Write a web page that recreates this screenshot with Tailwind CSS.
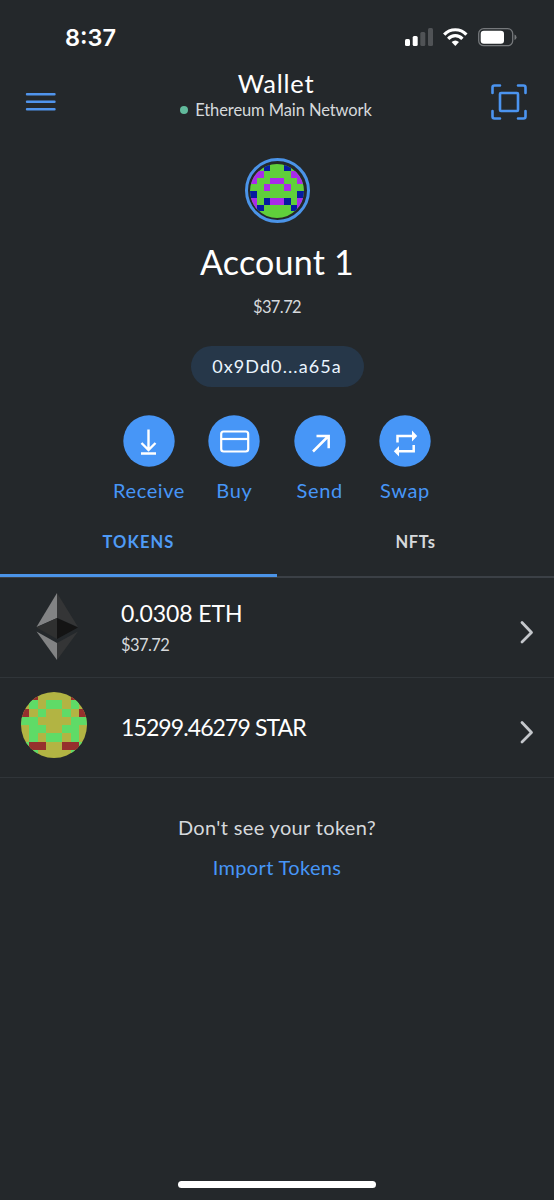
<!DOCTYPE html>
<html lang="en">
<head>
<meta charset="utf-8">
<title>Wallet</title>
<script src="https://cdn.jsdelivr.net/npm/@tailwindcss/browser@4"></script>
</head>
<body class="bg-[#24282b]">
<div class="flex h-[1200px] w-[554px] flex-col overflow-hidden bg-[#24282b] font-['Lato',sans-serif] text-white">
  <div class="flex h-[70px] shrink-0 items-center justify-between pt-1 pr-[37px] pl-[65px]">
    <span class="pt-px font-['Inter',sans-serif] text-[23.5px] leading-none font-semibold">8:37</span>
    <svg class="mt-[2px]" width="112" height="20" viewBox="0 0 112 20">
      <rect x="0" y="11" width="5" height="7" rx="1.5" fill="#fff"/>
      <rect x="7.7" y="8" width="5" height="10" rx="1.5" fill="#fff"/>
      <rect x="15.3" y="4" width="5" height="14" rx="1.5" fill="#505356"/>
      <rect x="23" y="0" width="5" height="18" rx="1.5" fill="#505356"/>
      <g fill="none" stroke="#fff" stroke-width="3.2">
        <path d="M39.2 6.6C45.300 .1 55.300 .1 61.400 6.600"/>
        <path d="M43.200 10.800c3.900-4.200 10.300-4.200 14.200 0"/>
      </g>
      <path d="M46.600 14q3.700-3 7.400 0L50.300 18z" fill="#fff"/>
      <rect x="73.700" y=".7" width="34" height="17" rx="5" fill="none" stroke="#75787b" stroke-width="1.300"/>
      <rect x="75.700" y="2.700" width="23.300" height="13" rx="3.200" fill="#fff"/>
      <path d="M109.500 6.500q2 .7 2 2.700t-2 2.700z" fill="#75787b"/>
    </svg>
  </div>

  <div class="flex h-[63px] shrink-0 items-center justify-between pr-[27px] pl-[25px]">
    <svg class="w-[36px]" width="36" height="22" viewBox="0 0 36 22" stroke="#5094ec" stroke-width="2.400" stroke-linecap="round"><path d="M2 3.200h27.500M2 10.700h27.500M2 18.200h27.500"/></svg>
    <div class="flex flex-col items-center pb-[15px]">
      <div class="text-[25.500px] leading-[30px] tracking-[0.75px]">Wallet</div>
      <div class="mt-[1px] flex items-center gap-[7px] text-[#d6d9dc]">
        <span class="size-[8px] rounded-full bg-[#61ba9c]"></span>
        <span class="text-[16.500px] leading-[22px] tracking-[-0.090px]">Ethereum Main Network</span>
      </div>
    </div>
    <svg width="36" height="36" viewBox="0 0 36 36" fill="none" stroke="#4b94f0" stroke-width="2.600" stroke-linecap="round" stroke-linejoin="round"><path d="M1.500 9V3.500q0-2 2-2H9M27 1.500h5.500q2 0 2 2V9M34.500 27v5.500q0 2-2 2H27M9 34.500H3.500q-2 0-2-2V27"/><rect x="9" y="9" width="18" height="18" rx="1"/></svg>
  </div>

  <div class="flex h-[253px] shrink-0 flex-col items-center pt-[25px]">
    <div class="flex size-[65px] shrink-0 items-center justify-center rounded-full border-3 border-[#4b94e8]">
      <svg class="size-[54px] rounded-full" viewBox="0 0 8 8" shape-rendering="crispEdges">
        <path fill="#60cf3b" d="M0 0h8v8H0z"/>
        <path fill="#a92bea" d="M0 1h2v1H0zM6 1h2v1H6zM0 2h1v1H0zM7 2h1v1H7zM3 2h2v1H3zM2 3h1v1H2zM5 3h1v1H5zM3 5h2v1H3zM0 5h1v2H0zM7 5h1v2H7z"/>
        <path fill="#061ba0" d="M2 0h1v1H2zM5 0h1v1H5zM0 4h1v1H0zM7 4h1v1H7zM2 5h1v1H2zM5 5h1v1H5zM1 6h1v1H1zM6 6h1v1H6z"/>
      </svg>
    </div>
    <div class="mt-[17px] shrink-0 text-[34px] leading-[44px] tracking-[0.200px]">Account 1</div>
    <div class="mt-[12px] shrink-0 text-[16.500px] leading-[22px] tracking-[-0.600px] text-[#d6d9dc]">$37.72</div>
    <div class="mt-[28px] flex h-[41px] w-[173px] shrink-0 items-center justify-center rounded-full bg-[#263749] text-[18px] tracking-[1.1px] text-[#eaf5ff]">0x9Dd0...a65a</div>
  </div>

  <div class="flex h-[134px] shrink-0 justify-center pt-[29px] text-[20px] leading-[24px] tracking-[0.600px] text-[#4796f7]">
    <div class="flex w-[85.300px] flex-col items-center gap-[11px]">
      <svg width="52" height="52" viewBox="0 0 52 52"><circle cx="26" cy="26" r="25.700" fill="#4796f7"/><path d="M25.500 14.500v20M18.500 28l7 7 7-7M18 38.500h15" fill="none" stroke="#fff" stroke-width="2.400"/></svg>
      <span>Receive</span>
    </div>
    <div class="flex w-[85.300px] flex-col items-center gap-[11px]">
      <svg width="52" height="52" viewBox="0 0 52 52"><circle cx="26" cy="26" r="25.700" fill="#4796f7"/><g fill="none" stroke="#fff" stroke-width="2.200"><rect x="13.200" y="16.500" width="27" height="20" rx="2.500"/><path d="M13.200 24h27"/></g></svg>
      <span>Buy</span>
    </div>
    <div class="flex w-[85.300px] flex-col items-center gap-[11px]">
      <svg width="52" height="52" viewBox="0 0 52 52"><circle cx="26" cy="26" r="25.700" fill="#4796f7"/><path d="M19 36.500 34.500 21M22.500 21h12.200v12.200" fill="none" stroke="#fff" stroke-width="2.500"/></svg>
      <span>Send</span>
    </div>
    <div class="flex w-[85.300px] flex-col items-center gap-[11px]">
      <svg width="52" height="52" viewBox="0 0 52 52"><circle cx="26" cy="26" r="25.700" fill="#4796f7"/><path d="M18.500 27.500v-6.500h15M34.700 30v6.200h-15" fill="none" stroke="#fff" stroke-width="2.500"/><path d="M33 15.500l5.200 5.500-5.200 5.500zM20 31l-5.200 5.300L20 41.500z" fill="#fff"/></svg>
      <span>Swap</span>
    </div>
  </div>

  <div class="flex h-[58px] shrink-0 border-b-2 border-[#3b4046] text-[16.500px] leading-[22px] font-bold">
    <div class="-mb-px flex flex-1 justify-center border-b-3 border-[#4b94e8] pt-[11px] text-[#4f9bf6]"><span class="tracking-[1.100px]">TOKENS</span></div>
    <div class="flex flex-1 justify-center pt-[11px] tracking-[0.700px] text-[#d6d9dc]">NFTs</div>
  </div>

  <div class="flex h-[100px] shrink-0 items-center border-b border-[#303539] pr-[20px] pb-[2px] pl-[21px]">
    <svg class="shrink-0" width="72" height="68" viewBox="0 0 72 68">
      <path fill="#828384" d="M36 0 15.500 34 36 25z"/><path fill="#343536" d="M36 0v25l21 9z"/>
      <path fill="#2f3030" d="M36 25 15.500 34.500 36 46z"/><path fill="#141414" d="M36 25v21l21-11.500z"/>
      <path fill="#828384" d="M15.500 38.500 36 50v17z"/><path fill="#343536" d="M36 50v17l21-28.500z"/>
    </svg>
    <div class="ml-[28px] flex-1">
      <div class="text-[23px] leading-[30px] tracking-[-0.100px]">0.0308 ETH</div>
      <div class="mt-[6px] text-[16.500px] leading-[22px] tracking-[-0.600px] text-[#d6d9dc]">$37.72</div>
    </div>
    <svg class="mt-[10px]" width="14" height="24" viewBox="0 0 14 24" fill="none" stroke="#c4c7cb" stroke-width="2.800" stroke-linecap="round" stroke-linejoin="round"><path d="M2 2.500 11.500 12.500 2 22"/></svg>
  </div>

  <div class="flex h-[100px] shrink-0 items-center border-b border-[#303539] pr-[20px] pb-[2px] pl-[21px]">
    <svg class="-mt-[4px] size-[66px] shrink-0 rounded-full" viewBox="0 0 8 8" shape-rendering="crispEdges">
      <path fill="#b2b443" d="M0 0h8v8H0z"/>
      <path fill="#5fdb67" d="M1 1h1v1H1zM6 1h1v1H6zM3 1h2v1H3zM2 2h1v1H2zM5 2h1v1H5zM0 3h2v1H0zM6 3h2v1H6zM1 4h2v1H1zM5 4h2v1H5zM1 5h1v1H1zM6 5h1v1H6zM3 5h2v1H3zM0 6h1v2H0zM7 6h1v2H7zM1 7h1v1H1zM6 7h1v1H6z"/>
      <path fill="#96302d" d="M1 0h1v1H1zM6 0h1v1H6zM0 2h1v1H0zM7 2h1v1H7zM1 6h2v1H1zM5 6h2v1H5z"/>
    </svg>
    <div class="ml-[34px] flex-1 text-[23px] leading-[30px] tracking-[-0.900px]">15299.46279 STAR</div>
    <svg class="mt-[10px]" width="14" height="24" viewBox="0 0 14 24" fill="none" stroke="#c4c7cb" stroke-width="2.800" stroke-linecap="round" stroke-linejoin="round"><path d="M2 2.500 11.500 12.500 2 22"/></svg>
  </div>

  <div class="flex flex-1 flex-col items-center gap-[14px] pt-[36px] text-[20px] leading-[26px] tracking-[0.350px]">
    <div class="text-[#d6d9dc]">Don't see your token?</div>
    <div class="text-[#4796f7]">Import Tokens</div>
  </div>
  <div class="mx-auto mb-[12px] h-[7px] w-[198px] shrink-0 rounded-full bg-white"></div>
</div>
</body>
</html>
